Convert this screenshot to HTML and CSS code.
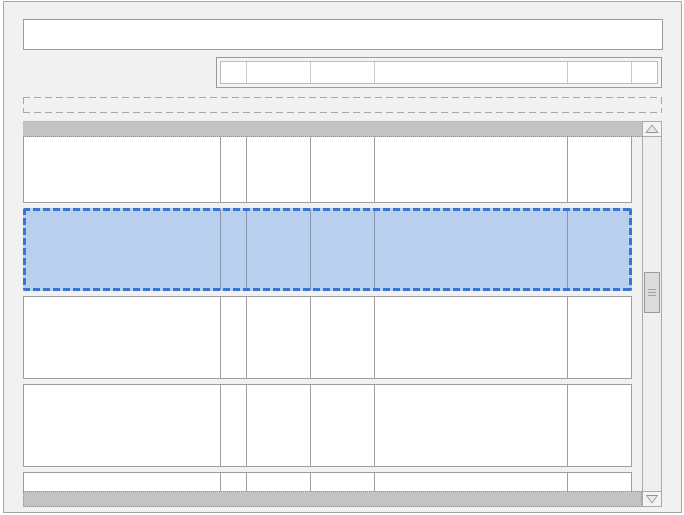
FILE: index.html
```html
<!DOCTYPE html>
<html>
<head>
<meta charset="utf-8">
<link rel="stylesheet" href="styles.css">
</head>
<body>
<div class="frame">
  <div class="input"></div>
  <div class="toolbar">
    <div class="tb-inner">
      <span class="tc w26"></span><span class="tc w64"></span><span class="tc w64"></span><span class="tc w193"></span><span class="tc w64"></span><span class="tc w25 last"></span>
    </div>
  </div>
  <div class="dashbox"></div>
  <div class="grid">
    <div class="table">
      <div class="head"></div>
      <div class="viewport">
        <div class="rows">
          <div class="row"><span class="cell"></span><span class="cell"></span><span class="cell"></span><span class="cell"></span><span class="cell"></span><span class="cell"></span></div>
          <div class="row selected"><span class="cell"></span><span class="cell"></span><span class="cell"></span><span class="cell"></span><span class="cell"></span><span class="cell"></span></div>
          <div class="row"><span class="cell"></span><span class="cell"></span><span class="cell"></span><span class="cell"></span><span class="cell"></span><span class="cell"></span></div>
          <div class="row"><span class="cell"></span><span class="cell"></span><span class="cell"></span><span class="cell"></span><span class="cell"></span><span class="cell"></span></div>
          <div class="row"><span class="cell"></span><span class="cell"></span><span class="cell"></span><span class="cell"></span><span class="cell"></span><span class="cell"></span></div>
        </div>
      </div>
      <div class="foot"></div>
    </div>
    <div class="scrollbar">
      <div class="sbtn up">
        <svg width="18" height="15" viewBox="0 0 18 15"><polygon points="3,10.5 9,3 15,10.5" fill="#e8e8e8" stroke="#959595" stroke-width="1" stroke-linejoin="round"/></svg>
      </div>
      <div class="track">
        <div class="thumb"><i></i><i></i><i></i></div>
      </div>
      <div class="sbtn down">
        <svg width="18" height="15" viewBox="0 0 18 15"><polygon points="3.5,3.5 9,11 14.5,3.5" fill="#e8e8e8" stroke="#959595" stroke-width="1" stroke-linejoin="round"/></svg>
      </div>
    </div>
  </div>
</div>
</body>
</html>
```
FILE: styles.css
```css
* { box-sizing: border-box; }
html, body { margin: 0; padding: 0; background: #ffffff; }
body { font-family: "Liberation Sans", Arial, sans-serif; }

.frame {
  margin: 1px 0 0 3px;
  width: 679px;
  height: 512px;
  border: 1px solid #a6a6a6;
  background: #f1f1f1;
  padding: 17px 0 0 19px;
  display: flex;
  flex-direction: column;
}

.input {
  width: 640px;
  height: 31px;
  border: 1px solid #9c9c9c;
  background: #ffffff;
}

.toolbar {
  margin-top: 7px;
  margin-left: 193px;
  width: 446px;
  height: 31px;
  border: 1px solid #9a9a9a;
  padding: 3px;
  background: #f4f4f4;
}
.tb-inner {
  height: 100%;
  border: 1px solid #bdbdbd;
  background: #ffffff;
  display: flex;
}
.tc { display: block; height: 100%; border-right: 1px solid #c8c8c8; }
.tc.last { border-right: none; }
.w26 { width: 26px; }
.w64 { width: 64px; }
.w193 { width: 193px; }
.w25 { width: 25px; }

.dashbox {
  margin-top: 9px;
  width: 639px;
  height: 16px;
  background:
    repeating-linear-gradient(90deg, #a8a8a8 0 7px, transparent 7px 11px) top left / 100% 1px no-repeat,
    repeating-linear-gradient(90deg, #a8a8a8 0 7px, transparent 7px 11px) bottom left / 100% 1px no-repeat,
    repeating-linear-gradient(180deg, #a8a8a8 0 7px, transparent 7px 11px) top left / 1px 100% no-repeat,
    repeating-linear-gradient(180deg, #a8a8a8 0 7px, transparent 7px 11px) top right / 1px 100% no-repeat;
}

.grid {
  margin-top: 8px;
  width: 639px;
  height: 386px;
  display: flex;
}

.table {
  width: 619px;
  display: flex;
  flex-direction: column;
}
.head {
  height: 16px;
  background: #c3c3c3;
  border-bottom: 1px dotted #8f8f8f;
  border-top: 1px dotted #b8b8b8;
}
.viewport {
  height: 354px;
  overflow: hidden;
}
.rows {
  margin-top: -17px;
  display: flex;
  flex-direction: column;
  gap: 5px;
}
.row {
  position: relative;
  width: 609px;
  height: 83px;
  border: 1px solid #9e9e9e;
  background: #ffffff;
  display: grid;
  grid-template-columns: 197px 26px 64px 64px 193px 63px;
}
.cell { display: block; border-right: 1px solid #9e9e9e; }
.cell:last-child { border-right: none; }

.row.selected {
  background: #b8cfee;
  border-color: transparent;
}
.row.selected .cell { border-right-color: #8796ad; }
.row.selected::after {
  content: "";
  position: absolute;
  inset: -1px;
  background:
    repeating-linear-gradient(90deg, #3874d0 0 7px, transparent 7px 10px) top left / 100% 3px no-repeat,
    repeating-linear-gradient(90deg, #3874d0 0 7px, transparent 7px 10px) bottom left / 100% 3px no-repeat,
    repeating-linear-gradient(180deg, #3874d0 0 7px, transparent 7px 10px) top left / 3px 100% no-repeat,
    repeating-linear-gradient(180deg, #3874d0 0 7px, transparent 7px 10px) top right / 3px 100% no-repeat;
  border-radius: 2px;
}

.foot {
  height: 16px;
  background: #c3c3c3;
  border: 1px dotted #8f8f8f;
}

.scrollbar {
  width: 20px;
  border: 1px solid #ababab;
  background: #efefef;
  display: flex;
  flex-direction: column;
}
.sbtn {
  height: 15px;
  background: #f3f3f3;
  display: flex;
  align-items: center;
  justify-content: center;
}
.sbtn svg { display: block; }
.sbtn.up { border-bottom: 1px solid #ababab; }
.sbtn.down { border-top: 1px solid #ababab; }
.track {
  flex: 1;
  overflow: hidden;
}
.thumb {
  margin: 135px 0 0 1px;
  width: 16px;
  height: 41px;
  border: 1px solid #9a9a9a;
  background: #dcdcdc;
  display: flex;
  flex-direction: column;
  align-items: center;
  justify-content: center;
  gap: 2px;
}
.thumb i {
  display: block;
  width: 8px;
  height: 1px;
  background: #a2a2a2;
}
```
